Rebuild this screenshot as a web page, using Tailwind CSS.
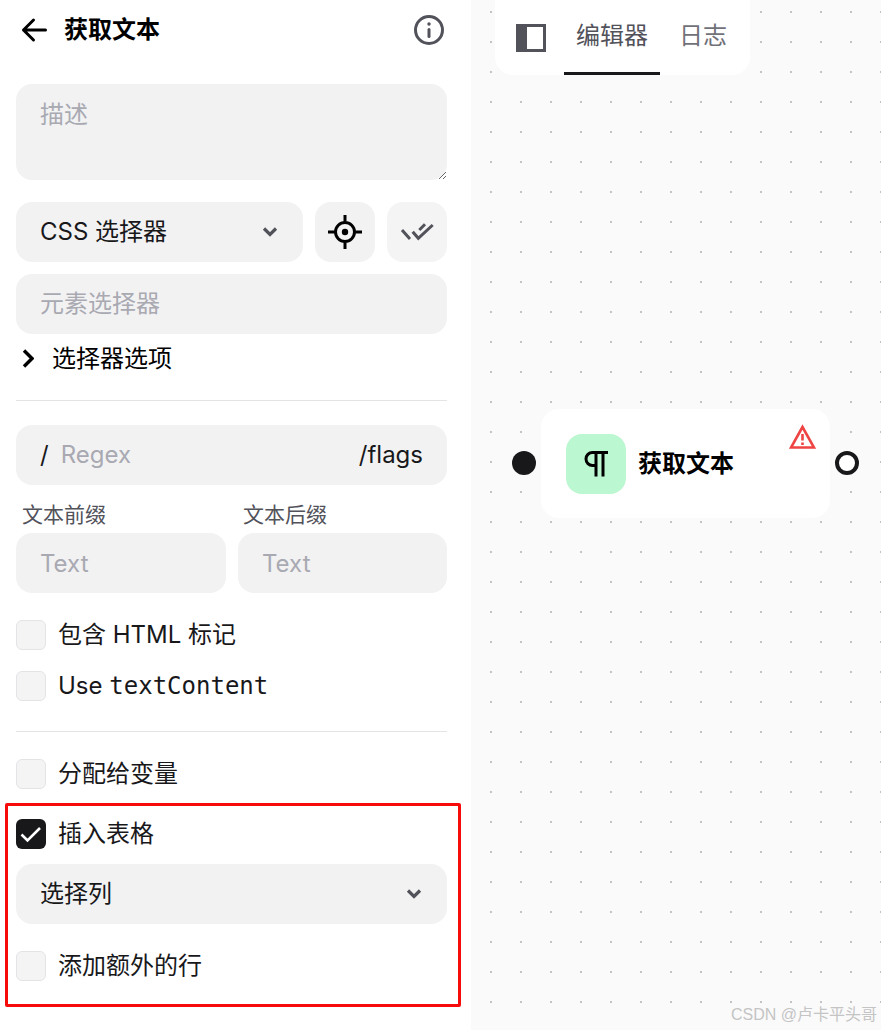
<!DOCTYPE html>
<html lang="zh-CN">
<head>
  <meta charset="UTF-8">
  <meta name="viewport" content="width=device-width, initial-scale=1.0">
  <title>获取文本</title>
  <script src="https://cdn.jsdelivr.net/npm/@tailwindcss/browser@4"></script>
</head>
<body class="bg-white font-['Inter','Noto_Sans_CJK_SC',sans-serif] text-[24px] text-[#18181b]">
<div class="relative flex h-[1030px] w-[881px] overflow-hidden">

  <!-- Settings panel -->
  <div class="relative w-[471px] shrink-0 bg-white px-4">

    <!-- Header -->
    <div class="flex h-[60px] items-center">
      <svg class="ml-[5px] h-[28px] w-[28px] text-black" viewBox="0 0 28 28" fill="none" stroke="currentColor" stroke-width="3" stroke-linecap="round" stroke-linejoin="round"><path d="M24.500 14H2.500M12.500 4 2.500 14l10 10"/></svg>
      <span class="ml-[15px] font-bold text-black">获取文本</span>
      <svg class="ml-auto mr-[11px] h-[30px] w-[30px] text-[#52525b]" viewBox="0 0 30 30" fill="none" stroke="currentColor" stroke-width="3" stroke-linecap="round"><circle cx="15" cy="15" r="13.500"/><path d="M15 14.500v7"/><circle cx="15" cy="9" r="1" fill="currentColor" stroke-width="1.500"/></svg>
    </div>

    <!-- Selector -->
    <textarea placeholder="描述" class="mt-6 block h-[96px] w-[431px] rounded-[16px] bg-[#f2f2f2] px-6 py-[13px] leading-[36px] outline-none placeholder:text-[#a9a9b2]"></textarea>
    <div class="mt-[22px] flex w-[431px] gap-3">
      <button class="flex h-[60px] w-[287px] items-center justify-between rounded-[16px] bg-[#f2f2f2] pl-6 pr-[25px]">
        <span>CSS 选择器</span>
        <svg class="h-[16px] w-[16px] text-[#52525b]" viewBox="0 0 16 16" fill="none" stroke="currentColor" stroke-width="3.200"><path d="m2 4.500 6 6 6-6"/></svg>
      </button>
      <button class="flex h-[60px] w-[60px] items-center justify-center rounded-[16px] bg-[#f2f2f2]">
        <svg class="h-[34px] w-[34px] text-black" viewBox="0 0 34 34" fill="none" stroke="currentColor" stroke-width="3"><circle cx="17" cy="17" r="9.500"/><circle cx="17" cy="17" r="3.200" fill="currentColor" stroke="none"/><path d="M17 0v6.500M17 27.500V34M0 17h6.500M27.500 17H34"/></svg>
      </button>
      <button class="flex h-[60px] w-[60px] items-center justify-center rounded-[16px] bg-[#f4f4f4]">
        <svg class="h-[34px] w-[34px] text-[#52525b]" viewBox="0 0 34 34" fill="none" stroke="currentColor" stroke-width="3"><path d="m2 15 8 9M12.700 16.700l5.600 6.600L32.700 10M19.300 15 25 9.300"/></svg>
      </button>
    </div>
    <input placeholder="元素选择器" class="mt-3 block h-[60px] w-[431px] rounded-[16px] bg-[#f2f2f2] px-6 pb-[1px] outline-none placeholder:text-[#a9a9b2]">
    <div class="mt-[6px] flex h-[36px] items-center">
      <svg class="ml-[6px] h-[19px] w-[12px] text-black" viewBox="0 0 12 19" fill="none" stroke="currentColor" stroke-width="3.400"><path d="m2 1.500 8 8-8 8"/></svg>
      <span class="ml-[18px] pt-[1px] text-black">选择器选项</span>
    </div>

    <div class="mt-[24px] h-px w-[431px] bg-[#e4e4e7]"></div>

    <!-- Regex -->
    <div class="mt-[24px] flex h-[60px] w-[431px] items-center rounded-[16px] bg-[#f2f2f2] px-6">
      <span>/</span>
      <span class="ml-[12px] text-[#a9a9b2]">Regex</span>
      <span class="ml-auto">/flags</span>
    </div>

    <!-- Prefix and suffix -->
    <div class="mt-[16px] flex w-[431px] gap-3">
      <div class="w-[210px]">
        <div class="h-[32px] pl-[6px] text-[21px] leading-[28px] text-[#52525b]">文本前缀</div>
        <input placeholder="Text" class="block h-[60px] w-full rounded-[16px] bg-[#f2f2f2] px-6 outline-none placeholder:text-[#a9a9b2]">
      </div>
      <div class="w-[209px]">
        <div class="h-[32px] pl-[5px] text-[21px] leading-[28px] text-[#52525b]">文本后缀</div>
        <input placeholder="Text" class="block h-[60px] w-full rounded-[16px] bg-[#f2f2f2] px-6 outline-none placeholder:text-[#a9a9b2]">
      </div>
    </div>

    <!-- Options -->
    <div class="mt-[27px] flex h-[30px] items-center gap-3">
      <div class="h-[30px] w-[30px] rounded-[6px] border border-[#e4e4e7] bg-[#f4f4f5]"></div>
      <span>包含 HTML 标记</span>
    </div>
    <div class="mt-[21px] flex h-[30px] items-center gap-3">
      <div class="h-[30px] w-[30px] rounded-[6px] border border-[#e4e4e7] bg-[#f4f4f5]"></div>
      <span>Use <code class="font-['DejaVu_Sans_Mono',monospace] text-[24px]">textContent</code></span>
    </div>

    <div class="mt-[30px] h-px w-[431px] bg-[#e4e4e7]"></div>

    <div class="mt-[27px] flex h-[30px] items-center gap-3">
      <div class="h-[30px] w-[30px] rounded-[6px] border border-[#e4e4e7] bg-[#f4f4f5]"></div>
      <span>分配给变量</span>
    </div>
    <div class="mt-[30px] flex h-[30px] items-center gap-3">
      <div class="flex h-[30px] w-[30px] items-center justify-center rounded-[6px] bg-[#18181b]">
        <svg class="h-[22px] w-[22px] text-white" viewBox="0 0 22 22" fill="none" stroke="currentColor" stroke-width="2.600"><path d="m1.500 11.500 6 6L20 5"/></svg>
      </div>
      <span>插入表格</span>
    </div>
    <button class="mt-[15px] flex h-[60px] w-[431px] items-center justify-between rounded-[16px] bg-[#f2f2f2] pl-6 pr-[25px]">
      <span>选择列</span>
      <svg class="h-[16px] w-[16px] text-[#52525b]" viewBox="0 0 16 16" fill="none" stroke="currentColor" stroke-width="3.200"><path d="m2 4.500 6 6 6-6"/></svg>
    </button>
    <div class="mt-[27px] flex h-[30px] items-center gap-3">
      <div class="h-[30px] w-[30px] rounded-[6px] border border-[#e4e4e7] bg-[#f4f4f5]"></div>
      <span>添加额外的行</span>
    </div>

    <!-- Red annotation frame -->
    <div class="absolute left-[5px] top-[803px] h-[204px] w-[456px] rounded-[2px] border-[3px] border-[#f60a0a]"></div>
  </div>

  <!-- Canvas -->
  <div class="relative flex-1 bg-[#fafafa] bg-[radial-gradient(circle,#c4c4c4_1px,transparent_1.200px)] bg-[size:30px_30px] bg-[position:5px_-3px]">

    <!-- Tabs -->
    <div class="absolute left-[24px] top-0 flex h-[75px] w-[255px] items-start rounded-b-[18px] bg-white">
      <svg class="ml-[21px] mt-[24px] h-[28px] w-[30px] text-[#52525b]" viewBox="0 0 30 28" fill="none"><rect x="1.500" y="1.500" width="27" height="25" stroke="currentColor" stroke-width="3"/><rect x="1" y="1" width="10" height="26" fill="currentColor"/></svg>
      <div class="relative ml-[18px] h-[75px] w-[96px] pt-[18px] text-center leading-[36px] text-[#52525b]">
        编辑器
        <div class="absolute bottom-0 left-0 h-[3px] w-full bg-[#18181b]"></div>
      </div>
      <div class="ml-[19px] pt-[18px] leading-[36px] text-[#71717a]">日志</div>
    </div>

    <!-- Node -->
    <div class="absolute left-[70px] top-[409px] flex h-[109px] w-[289px] items-center rounded-[18px] bg-white pl-[25px]">
      <div class="flex h-[60px] w-[60px] items-center justify-center rounded-[16px] bg-[#bbf7d0]">
        <svg class="h-[26px] w-[26px] text-black" viewBox="0 0 26 26" fill="none" stroke="currentColor" stroke-width="3"><path d="M25 1.500H9.500a6.500 6.500 0 0 0 0 13H13M13 1.500V25.500M20 1.500V25.500"/></svg>
      </div>
      <span class="ml-[12px] font-bold text-black">获取文本</span>
      <svg class="absolute right-[14px] top-[15px] h-[26px] w-[27px] text-[#ef4444]" viewBox="0 0 27 26" fill="none" stroke="currentColor" stroke-width="2.600"><path d="M13.500 3 2 23.500h23zM13.500 10v6.500M13.500 18.500v2.500"/></svg>
    </div>
    <div class="absolute left-[40.500px] top-[451px] h-[24px] w-[24px] rounded-full bg-[#18181b]"></div>
    <div class="absolute left-[364px] top-[451px] h-[24px] w-[24px] rounded-full border-[4px] border-[#18181b] bg-white"></div>

    <!-- Watermark -->
    <div class="absolute bottom-[5px] right-[4px] font-['Liberation_Sans','Noto_Sans_CJK_SC',sans-serif] text-[16px] leading-[20px] text-[#c4c4c4]">CSDN @卢卡平头哥</div>
  </div>
</div>
</body>
</html>
